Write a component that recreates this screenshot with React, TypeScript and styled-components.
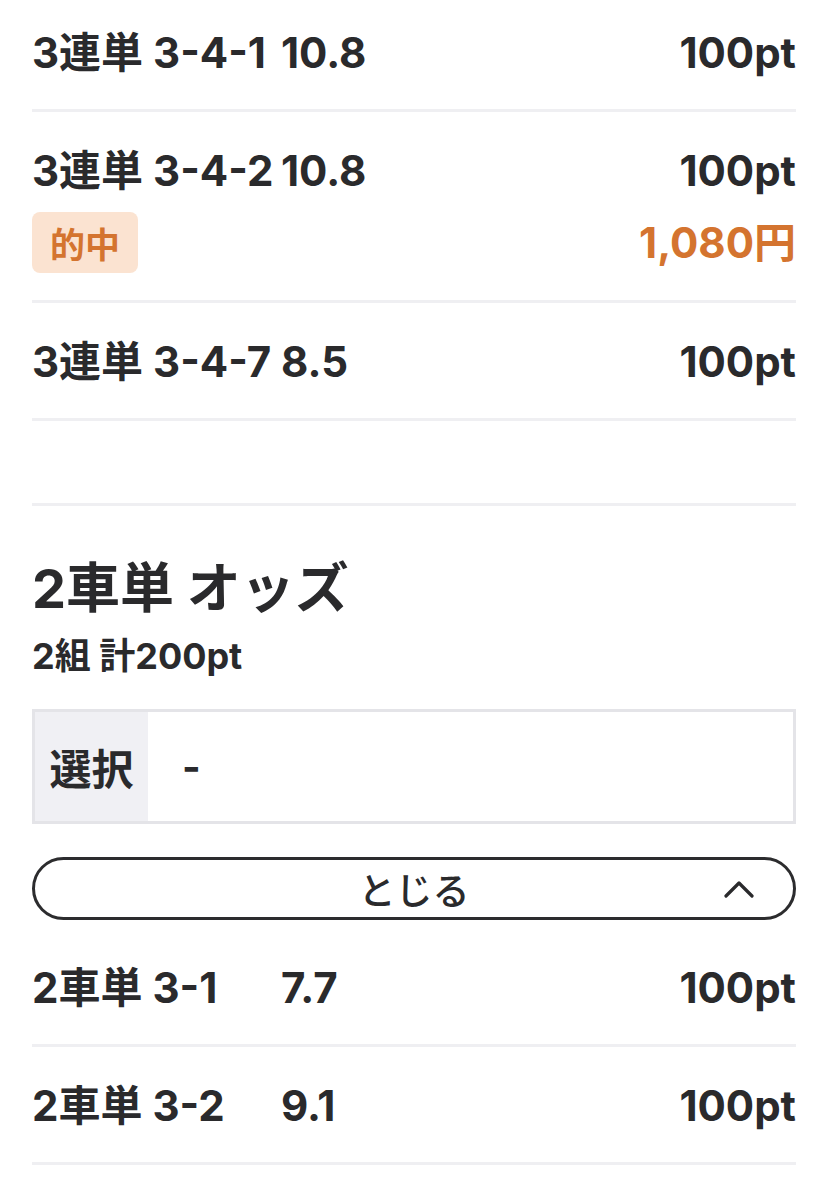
import React from 'react';
import styled, { createGlobalStyle } from 'styled-components';

const GlobalStyle = createGlobalStyle`
  html, body {
    margin: 0;
    padding: 0;
    background: #fff;
  }
  body {
    font-family: Inter, "Noto Sans CJK JP", sans-serif;
    color: #2a2a2c;
  }
`;

// Styles
const Page = styled.div`
  padding: 0 32px;
  margin-top: -6px;
`;

const Row = styled.div<{ $bottom?: number }>`
  padding: 36px 0 ${(p) => (p.$bottom ?? 33)}px;
  border-bottom: 3px solid #efeff2;
`;

const Line = styled.div`
  display: grid;
  grid-template-columns: 249px 1fr auto;
  align-items: center;
  font-size: 42px;
  font-weight: 700;
  line-height: 46px;
  white-space: nowrap;
`;

const ResultLine = styled.div`
  display: flex;
  justify-content: space-between;
  align-items: center;
  margin-top: 18px;
`;

const Badge = styled.span`
  display: inline-flex;
  align-items: center;
  justify-content: center;
  height: 61px;
  padding: 0 18px;
  border-radius: 8px;
  background: #fbe3d1;
  color: #d4742f;
  font-size: 35px;
  font-weight: 700;
`;

const Payout = styled.span`
  color: #d4742f;
  font-size: 42px;
  font-weight: 700;
  line-height: 46px;
`;

const Spacer = styled.div`
  height: 82px;
  border-bottom: 3px solid #efeff2;
`;

const Section = styled.section`
  padding-top: 51px;
`;

const Title = styled.h2`
  margin: 0;
  font-size: 54px;
  font-weight: 700;
  line-height: 64px;
`;

const Sub = styled.div`
  margin-top: 15px;
  font-size: 36px;
  font-weight: 700;
  line-height: 40px;
`;

const SelectBox = styled.div`
  display: flex;
  margin-top: 33px;
  height: 109px;
  border: 3px solid #e4e4e8;
`;

const SelectLabel = styled.div`
  display: flex;
  align-items: center;
  justify-content: center;
  width: 113px;
  background: #f0f0f4;
  font-size: 42px;
  font-weight: 700;
`;

const SelectValue = styled.div`
  display: flex;
  align-items: center;
  padding-left: 34px;
  font-size: 40px;
  font-weight: 700;
`;

const ToggleButton = styled.button`
  position: relative;
  display: flex;
  align-items: center;
  justify-content: center;
  box-sizing: border-box;
  width: 100%;
  height: 63px;
  margin-top: 33px;
  padding: 0;
  border: 3px solid #2c2c2e;
  border-radius: 32px;
  background: #fff;
  color: #2a2a2c;
  font-family: "Noto Sans CJK JP", sans-serif;
  font-size: 37px;
  font-weight: 500;

  svg {
    position: absolute;
    right: 39px;
    top: 50%;
    transform: translateY(-50%);
  }
`;

const List = styled.div`
  margin-top: 9px;
`;

type Bet = { name: string; odds: string; amount: string; payout?: string };

const trifecta: Bet[] = [
  { name: '3連単 3-4-1', odds: '10.8', amount: '100pt' },
  { name: '3連単 3-4-2', odds: '10.8', amount: '100pt', payout: '1,080円' },
  { name: '3連単 3-4-7', odds: '8.5', amount: '100pt' },
];

const exacta: Bet[] = [
  { name: '2車単 3-1', odds: '7.7', amount: '100pt' },
  { name: '2車単 3-2', odds: '9.1', amount: '100pt' },
];

const BetRow: React.FC<{ bet: Bet }> = ({ bet }) => (
  <Row $bottom={bet.payout ? 27 : 33}>
    <Line>
      <span>{bet.name}</span>
      <span>{bet.odds}</span>
      <span>{bet.amount}</span>
    </Line>
    {bet.payout && (
      <ResultLine>
        <Badge>的中</Badge>
        <Payout>{bet.payout}</Payout>
      </ResultLine>
    )}
  </Row>
);

const App: React.FC = () => {
  return (
    <>
      <GlobalStyle />
      <Page>
        {trifecta.map((b) => (
          <BetRow key={b.name} bet={b} />
        ))}
        <Spacer />
        <Section>
          <Title>2車単 オッズ</Title>
          <Sub>2組 計200pt</Sub>
          <SelectBox>
            <SelectLabel>選択</SelectLabel>
            <SelectValue>-</SelectValue>
          </SelectBox>
          <ToggleButton>
            とじる
            <svg width="30" height="18" viewBox="0 0 30 18" fill="none">
              <path d="M2 16 L15 3 L28 16" stroke="#2a2a2c" strokeWidth="3.2" strokeLinecap="round" strokeLinejoin="round" />
            </svg>
          </ToggleButton>
          <List>
            {exacta.map((b) => (
              <BetRow key={b.name} bet={b} />
            ))}
          </List>
        </Section>
      </Page>
    </>
  );
};

export default App;
